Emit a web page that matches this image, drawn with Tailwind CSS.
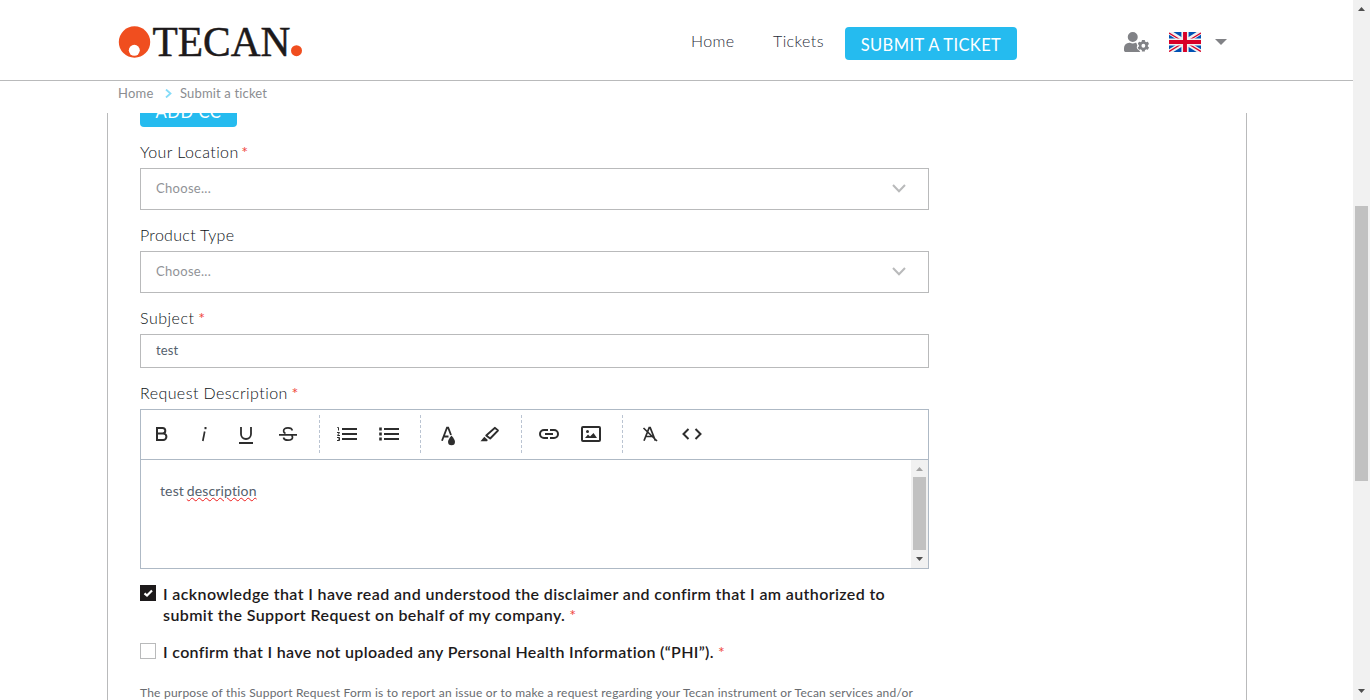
<!DOCTYPE html>
<html lang="en">
<head>
<meta charset="utf-8">
<title>Submit a ticket</title>
<script src="https://cdn.jsdelivr.net/npm/@tailwindcss/browser@4"></script>
</head>
<body class="h-[700px] overflow-hidden bg-white font-['Lato',sans-serif] font-light text-[#3c4650]">
<div class="flex h-full">
  <div class="flex h-full w-[1353px] flex-col">
    <header class="flex h-[81px] shrink-0 items-start border-b border-[#b9babb]">
      <svg class="ml-[118px] mt-[22px] shrink-0 overflow-visible" width="186" height="40" viewBox="0 0 186 40">
        <circle cx="16.500" cy="20" r="15.700" fill="#f04e1f"/>
        <circle cx="16.300" cy="28.300" r="5.500" fill="#fff"/>
        <text x="34.500" y="34" textLength="138" lengthAdjust="spacingAndGlyphs" font-family="Liberation Serif, serif" font-weight="400" font-size="43" fill="#1d1a1b" stroke="#1d1a1b" stroke-width=".5">TECAN</text>
        <circle cx="178.500" cy="28.700" r="5.500" fill="#f04e1f"/>
      </svg>
      <nav class="ml-[387px] mt-[27px] flex h-[33px] items-center whitespace-nowrap text-[16px] text-[#1f2c39]">
        <a class="-mt-1.5 w-[82px] tracking-[0.4px]">Home</a>
        <a class="-mt-1.5 w-[72px] tracking-[0.4px]">Tickets</a>
        <a class="flex h-[33px] w-[172px] items-center justify-center rounded-[4px] bg-[#25bbef] pt-[3px] text-[16.500px] font-normal tracking-[0.4px] text-white">SUBMIT A TICKET</a>
      </nav>
      <svg class="ml-[107px] mt-[32px]" width="25" height="20" viewBox="0 0 640 512" preserveAspectRatio="none" fill="#818286"><path d="M224 256a128 128 0 1 0 0-256 128 128 0 1 0 0 256zM314 275h-17a174 174 0 0 1-146 0h-17A134 134 0 0 0 0 409v55c0 27 21 48 48 48h370l-28-36c-38-22-66-62-63-93l14-39z"/><path fill-rule="evenodd" d="M610 373a116 116 0 0 0 0-42l26-15c3-2 4-5 3-9a151 151 0 0 0-33-57c-2-3-6-3-9-1l-26 14a115 115 0 0 0-36-20v-30c0-3-2-6-6-7a157 157 0 0 0-66 0c-4 1-6 4-6 7v30c-13 4-26 12-36 20l-26-14c-3-2-7-2-9 1-15 16-27 36-33 57-1 4 0 7 3 9l26 15a116 116 0 0 0 0 42l-26 15c-3 2-4 5-3 9 6 21 18 41 33 57 2 3 6 3 9 1l26-14c10 8 23 16 36 20v30c0 3 2 6 6 7 21 5 44 5 66 0 4-1 6-4 6-7v-30c13-4 26-12 36-20l26 14c3 2 7 2 9-1 15-16 27-36 33-57 1-4 0-7-3-9zM496 401a49 49 0 1 1 0-98 49 49 0 0 1 0 98z"/></svg>
      <svg class="ml-[20px] mt-[32px]" width="32" height="20" viewBox="0 0 32 20">
        <rect width="32" height="20" fill="#0052b4"/>
        <path d="M0 0L32 20M32 0L0 20" stroke="#f0f0f0" stroke-width="4.600"/>
        <path d="M0 1L14 9.500M32 1L18 9.500M0 19.500L14 11M32 19.500L18 11" stroke="#d80027" stroke-width="1.400"/>
        <path d="M16 0V20M0 10H32" stroke="#f0f0f0" stroke-width="7.200"/>
        <path d="M16 0V20M0 10H32" stroke="#d80027" stroke-width="3.900"/>
      </svg>
      <svg class="ml-[14px] mt-[39px]" width="12" height="6" viewBox="0 0 12 6"><path d="M0 0H12L6 6z" fill="#818286"/></svg>
    </header>

    <div class="flex h-8 shrink-0 items-center whitespace-nowrap pb-1.5 pl-[118px] text-[13px] font-normal text-[#8b8d91]">
      <span class="w-[47px] tracking-[0.2px]">Home</span>
      <svg class="-mt-px mr-[8px]" width="7" height="9" viewBox="0 0 7 9" fill="none" stroke="#85dcf8" stroke-width="1.800"><path d="M1 .5L5.500 4.500L1 8.500"/></svg>
      <span class="tracking-[0.160px]">Submit a ticket</span>
    </div>

    <main class="ml-[107px] flex h-[587px] w-[1140px] flex-col overflow-hidden border-x border-[#b9babb] pl-8">
      <button class="-mt-[19px] h-[33px] w-[97px] shrink-0 rounded-[4px] bg-[#25bbef] pt-[3px] text-[16.500px] font-normal tracking-[0.600px] text-white">ADD CC</button>
      <div class="flex w-[789px] shrink-0 flex-col text-[13px] text-[#55616d]">
        <label class="h-[41px] pt-[14px] text-[16px] leading-[22px] tracking-[0.4px] text-[#0c1216]">Your Location <span class="-ml-[2px] font-normal text-[#f0483e]">*</span></label>
        <div class="flex h-[42px] items-center justify-between border border-[#b9babb] pl-[15px] pr-[22px] font-normal text-[#919397]"><span class="tracking-[0.3px]">Choose...</span>
          <svg class="-mt-px" width="14" height="9" viewBox="0 0 14 9" fill="none" stroke="#b9babb" stroke-width="2"><path d="M1 1L7 7.300L13 1"/></svg></div>
        <label class="h-[41px] pt-[14px] text-[16px] leading-[22px] tracking-[0.3px] text-[#0c1216]">Product Type</label>
        <div class="flex h-[42px] items-center justify-between border border-[#b9babb] pl-[15px] pr-[22px] font-normal text-[#919397]"><span class="tracking-[0.3px]">Choose...</span>
          <svg class="-mt-px" width="14" height="9" viewBox="0 0 14 9" fill="none" stroke="#b9babb" stroke-width="2"><path d="M1 1L7 7.300L13 1"/></svg></div>
        <label class="h-[41px] pt-[14px] text-[16px] leading-[22px] tracking-[0.5px] text-[#0c1216]">Subject <span class="-ml-px font-normal text-[#f0483e]">*</span></label>
        <div class="flex h-[34px] items-center border border-[#b9babb] pl-[15px] font-normal tracking-[0.1px]">test</div>
        <label class="h-[41px] pt-[14px] text-[16px] leading-[22px] tracking-[0.43px] text-[#0c1216]">Request Description <span class="-ml-px font-normal text-[#f0483e]">*</span></label>

        <div class="flex h-[160px] flex-col border border-[#aeb9c5]">
          <div class="flex h-[50px] shrink-0 items-center border-b border-[#aeb9c5] pb-[2px] text-[#2d2d2d]">
            <div class="flex w-[178px] items-center">
              <svg width="42" height="24" viewBox="-9 0 42 24" fill="none" stroke="currentColor" stroke-width="2"><path d="M7 6H12.500A2.800 2.800 0 0 1 12.500 11.600H7M7 11.600H13.200A3.100 3.100 0 0 1 13.200 18H7M7 5V19"/></svg>
              <svg width="42" height="24" viewBox="-9 0 42 24" fill="none" stroke="currentColor"><path d="M12.700 9.500L10.800 19" stroke-width="1.700"/><path d="M13.500 5V7.200" stroke-width="2"/></svg>
              <svg width="42" height="24" viewBox="-9 0 42 24" fill="none" stroke="currentColor" stroke-width="1.800"><path d="M7 5V12A5 5 0 0 0 17 12V5M5 21H19" /></svg>
              <svg width="42" height="24" viewBox="-9 0 42 24" fill="none" stroke="currentColor" stroke-width="1.700"><path d="M3 12.800H21M16.300 8.500C16 6.700 14.300 5.800 12 5.800C9.300 5.800 7.600 7 7.600 9C7.600 10.200 8.300 11 9.500 11.600M7.500 15.500C7.800 17.300 9.500 18.200 12 18.200C14.800 18.200 16.500 17 16.500 15.300C16.500 14.500 16.200 13.800 15.700 13.300"/></svg>
            </div>
            <div class="flex h-[38px] w-[101px] items-center border-l border-dashed border-[#bac4d2] pl-[6px]">
              <svg width="42" height="24" viewBox="-9 0 42 24" fill="none" stroke="currentColor"><path d="M7 7H22M7 12H22M7 17H22" stroke-width="2"/><path d="M2.300 5.500H3.500V8.500M2 10.500H4.500L2.500 13.500H5M2 15.500H4.500V17H3M4.500 17V18.500H2"/></svg>
              <svg width="42" height="24" viewBox="-9 0 42 24" fill="none" stroke="currentColor"><path d="M7 7H22M7 12H22M7 17H22" stroke-width="2"/><path d="M3.500 5.500V8.500M3.500 10.500V13.500M3.500 15.500V18.500" stroke-width="2.600"/></svg>
            </div>
            <div class="flex h-[38px] w-[101px] items-center border-l border-dashed border-[#bac4d2] pl-[6px]">
              <svg width="42" height="24" viewBox="-9 0 42 24" fill="none" stroke="currentColor" stroke-width="1.800"><path d="M6 18.800L11 5.700H12.200L15 13M7.700 14.500H12.500"/><path d="M15.500 13.500C13.500 16 12 18 12 19.800A3.500 3.500 0 0 0 19 19.800C19 18 17.500 16 15.500 13.500Z" fill="currentColor" stroke="none"/></svg>
              <svg width="42" height="24" viewBox="-9 0 42 24" fill="none" stroke="currentColor" stroke-width="1.800"><path d="M17 5.800L20 8.500L12.200 16.500L8.200 13.500Z" stroke-linejoin="round"/><path d="M6.300 14.800L9.800 18L9 19.200H2.500Z" fill="currentColor" stroke="none"/></svg>
            </div>
            <div class="flex h-[38px] w-[101px] items-center border-l border-dashed border-[#bac4d2] pl-[6px]">
              <svg width="42" height="24" viewBox="-9 0 42 24" fill="none" stroke="currentColor" stroke-width="2"><path d="M11 8H7A4 4 0 0 0 7 16H11M13 8H17A4 4 0 0 1 17 16H13M8 12H16"/></svg>
              <svg width="42" height="24" viewBox="-9 0 42 24" fill="none" stroke="currentColor" stroke-width="2"><rect x="3" y="5" width="18" height="14" rx="1"/><circle cx="8.500" cy="9.500" r="1.500" fill="currentColor" stroke="none"/><path d="M6 16L9 12.500L11 14.500L14.500 11L18 16Z" fill="currentColor" stroke="none"/></svg>
            </div>
            <div class="flex h-[38px] items-center border-l border-dashed border-[#bac4d2] pl-[6px]">
              <svg width="42" height="24" viewBox="-9 0 42 24" fill="none" stroke="currentColor" stroke-width="1.700"><path d="M6 18.800L11.200 5.700H12.200L17.400 18.800M8 14.500H15.500M5.500 6L19 19"/></svg>
              <svg width="42" height="24" viewBox="-9 0 42 24" fill="none" stroke="currentColor" stroke-width="2"><path d="M8.500 7L3.500 12L8.500 17M15.500 7L20.500 12L15.500 17"/></svg>
            </div>
          </div>
          <div class="flex min-h-0 flex-1">
            <p class="flex-1 pl-[19px] pt-[21px] text-[14px] font-normal leading-[20px] tracking-[0.14px]">test <span class="-ml-px underline decoration-[#ee1c1c] decoration-wavy decoration-[1px] underline-offset-[1px]">description</span></p>
            <div class="flex w-[17px] flex-col items-center bg-[#f1f1f1]">
              <svg class="h-[17px] w-[17px] shrink-0" viewBox="0 0 17 17"><path d="M5 11H12L8.500 7z" fill="#a3a3a3"/></svg>
              <div class="h-[73px] w-[13px] bg-[#c1c1c1]"></div>
              <svg class="h-[18px] w-[17px] shrink-0" viewBox="0 0 17 18"><path d="M5 7H12L8.500 11z" fill="#505050"/></svg>
            </div>
          </div>
        </div>

        <div class="mt-[16px] flex text-[16px] font-semibold leading-[21px] text-[#1d1a1b]">
          <svg class="mr-[7px] shrink-0" width="16" height="16" viewBox="0 0 16 16"><rect width="16" height="16" fill="#1d1a1b"/><path d="M4.500 8.300L7 10.500L12 5.500" fill="none" stroke="#fff" stroke-width="2.200"/></svg>
          <div class="-mt-[2px] whitespace-nowrap"><div><span class="tracking-[0.375px]">I acknowledge that I have read and understood the disclaimer and confirm that I am authorized to</span></div><div><span class="tracking-[0.400px]">submit the Support Request on behalf of my company.</span> <span class="font-normal text-[#f0483e]">*</span></div></div>
        </div>
        <div class="mt-[17px] flex text-[16px] font-semibold leading-[21px] text-[#1d1a1b]">
          <div class="mr-[7px] mt-px h-4 w-4 shrink-0 border border-[#b9babb]"></div>
          <div class="-mt-px whitespace-nowrap"><span class="tracking-[0.335px]">I confirm that I have not uploaded any Personal Health Information (“PHI”).</span> <span class="font-normal text-[#f0483e]">*</span></div>
        </div>
        <p class="mt-[21px] whitespace-nowrap text-[12px] font-normal leading-[20px] text-[#696c70]"><span class="tracking-[0.215px]">The purpose of this Support Request Form is to report an issue or to make a request regarding your Tecan instrument or Tecan services and/or</span></p>
      </div>
    </main>
  </div>
  <div class="flex h-full w-[17px] flex-col items-center bg-[#f1f1f1]">
    <svg class="h-[17px] w-[17px] shrink-0" viewBox="0 0 17 17"><path d="M5 11H12L8.500 7z" fill="#505050"/></svg>
    <div class="mt-[189px] h-[275px] w-[13px] bg-[#c1c1c1]"></div>
    <svg class="mt-auto h-[17px] w-[17px] shrink-0" viewBox="0 0 17 17"><path d="M5 6H12L8.500 10z" fill="#505050"/></svg>
  </div>
</div>
</body>
</html>
